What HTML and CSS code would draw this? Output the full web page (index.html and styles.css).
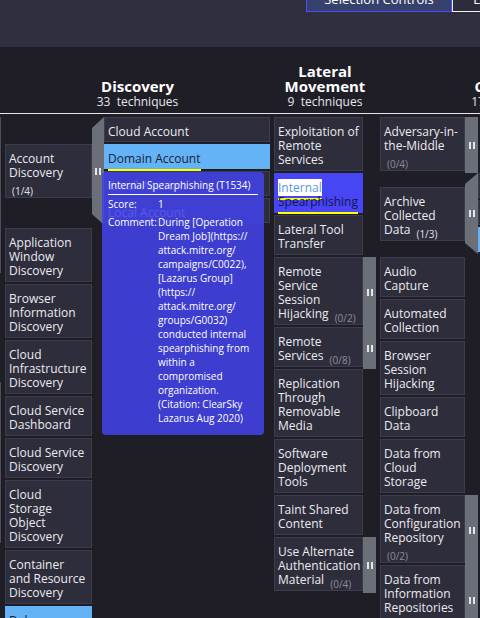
FILE: index.html
```html
<!DOCTYPE html>
<html>
<head>
<meta charset="utf-8">
<title>ATT&amp;CK Navigator</title>
<link rel="stylesheet" href="styles.css">
</head>
<body>
<div class="topbar">
  <div class="tbtn sel">Selection Controls</div>
  <div class="tbtn lyr">Layer Controls</div>
</div>

<div class="matrix">
  <div class="hdr-row">
    <div class="col col-stub"></div>
    <div class="col col-disc hdr"><div class="name">Discovery</div><div class="cnt">33&nbsp; techniques</div></div>
    <div class="col col-lat hdr"><div class="name">Lateral Movement</div><div class="cnt">9&nbsp; techniques</div></div>
    <div class="col col-coll hdr"><div class="name">Collection</div><div class="cnt">17&nbsp; techniques</div></div>
  </div>

  <div class="body-row">
    <div class="col col-stub">
      <div class="stub-seg a"></div>
      <div class="stub-seg b"></div>
    </div>

    <div class="col col-disc">
      <div class="grp">
        <div class="tw"><div class="t">Account Discovery <span class="c on">(1/4)</span></div></div>
        <div class="handle exp"><span class="grip"></span></div>
        <div class="subs">
          <div class="s">Cloud Account</div>
          <div class="s lb"><span class="u">Domain Account</span></div>
          <div class="s">Email Account</div>
          <div class="s">Local Account</div>
        </div>
      </div>
      <div class="t">Application Window Discovery</div>
      <div class="t">Browser Information Discovery</div>
      <div class="t">Cloud Infrastructure Discovery</div>
      <div class="t">Cloud Service Dashboard</div>
      <div class="t">Cloud Service Discovery</div>
      <div class="t">Cloud Storage Object Discovery</div>
      <div class="t">Container and Resource Discovery</div>
      <div class="t lb">Debugger Evasion</div>
      <div class="t">Device Driver Discovery</div>
    </div>

    <div class="col col-lat">
      <div class="t">Exploitation of Remote Services</div>
      <div class="t hot"><span class="u"><span class="hl">Internal</span> Spearphishing</span></div>
      <div class="t">Lateral Tool Transfer</div>
      <div class="row">
        <div class="t">Remote Service Session Hijacking <span class="c">(0/2)</span></div>
        <div class="handle"><span class="grip"></span></div>
      </div>
      <div class="row">
        <div class="t">Remote Services <span class="c">(0/8)</span></div>
        <div class="handle"><span class="grip"></span></div>
      </div>
      <div class="t">Replication Through Removable Media</div>
      <div class="t">Software Deployment Tools</div>
      <div class="t">Taint Shared Content</div>
      <div class="row">
        <div class="t">Use Alternate Authentication Material <span class="c">(0/4)</span></div>
        <div class="handle"><span class="grip"></span></div>
      </div>
    </div>

    <div class="col col-coll">
      <div class="row">
        <div class="t">Adversary-in-the-Middle <span class="c">(0/4)</span></div>
        <div class="handle"><span class="grip"></span></div>
      </div>
      <div class="grp">
        <div class="tw"><div class="t">Archive Collected Data <span class="c on">(1/3)</span></div></div>
        <div class="handle exp"><span class="grip"></span></div>
        <div class="subs">
          <div class="s">Archive via Custom Method</div>
          <div class="s">Archive via Library</div>
          <div class="s lb">Archive via Utility</div>
        </div>
      </div>
      <div class="t">Audio Capture</div>
      <div class="t">Automated Collection</div>
      <div class="t">Browser Session Hijacking</div>
      <div class="t">Clipboard Data</div>
      <div class="t">Data from Cloud Storage</div>
      <div class="row">
        <div class="t">Data from Configuration Repository <span class="c">(0/2)</span></div>
        <div class="handle"><span class="grip"></span></div>
      </div>
      <div class="row">
        <div class="t">Data from Information Repositories <span class="c">(0/3)</span></div>
        <div class="handle"><span class="grip"></span></div>
      </div>
    </div>
  </div>
</div>

<div class="tip">
  <div class="tip-title">Internal Spearphishing (T1534)</div>
  <div class="tip-grid">
    <div>Score:</div><div>1</div>
    <div>Comment:</div>
    <div>During [Operation<br>Dream Job](https://<br>attack.mitre.org/<br>campaigns/C0022),<br>[Lazarus Group]<br>(https://<br>attack.mitre.org/<br>groups/G0032)<br>conducted internal<br>spearphishing from<br>within a<br>compromised<br>organization.<br>(Citation: ClearSky<br>Lazarus Aug 2020)</div>
  </div>
</div>
</body>
</html>
```

FILE: styles.css
```css
html, body {
  margin: 0;
  padding: 0;
  width: 480px;
  height: 618px;
  overflow: hidden;
}
body {
  position: relative;
  background: #1f1e27;
  font-family: "Open Sans", "Noto Sans", sans-serif;
  color: #ebebf0;
}

/* top bar */
.topbar {
  height: 47px;
  background: #302f3f;
  display: flex;
  align-items: flex-start;
  padding-left: 306px;
  box-sizing: border-box;
}
.tbtn {
  flex: none;
  box-sizing: border-box;
  height: 26px;
  margin-top: -14px;
  line-height: 24px;
  font-size: 13px;
  color: #fff;
  text-align: center;
  white-space: nowrap;
}
.tbtn.sel {
  width: 146px;
  background: #36416c;
  border: 1px solid #4a4aff;
}
.tbtn.lyr {
  width: 130px;
  background: #2d2c3c;
  border: 1px solid #f0f0f0;
}

/* matrix */
.hdr-row {
  display: flex;
  gap: 4px;
  height: 67px;
  box-sizing: border-box;
  border-bottom: 1px solid #e6e6ea;
}
.body-row {
  display: flex;
  gap: 4px;
  padding-top: 3px;
  align-items: flex-start;
}
.col { flex: none; }
.col-stub { width: 1px; }
.col-disc { width: 265px; }
.col-lat { width: 102px; }
.col-coll { width: 264px; }

.hdr {
  height: 66px;
  box-sizing: border-box;
  display: flex;
  flex-direction: column;
  justify-content: flex-end;
  align-items: center;
  text-align: center;
  padding-bottom: 3px;
}
.hdr .name {
  font-weight: 700;
  font-size: 15px;
  line-height: 15px;
  color: #ffffff;
}
.hdr .cnt {
  font-size: 12px;
  line-height: 16px;
  color: #e6e6ea;
  white-space: nowrap;
}

.stub-seg { width: 1px; background: #4e4d5b; }
.stub-seg.a { height: 156px; }
.stub-seg.b { height: 161px; margin-top: 109px; }

/* technique cards */
.t, .s {
  box-sizing: border-box;
  background: #2e2d3b;
  border: 1px solid #3d3c4b;
  color: #ebebf0;
  font-size: 12px;
  line-height: 14px;
  margin-bottom: 2px;
  flex: none;
}
.t { padding: 7px 4px 3px 3px; }
.col-disc .t { width: 87px; padding-right: 4px; }
.col-lat .t { width: 89px; padding-right: 3px; }
.col-coll .t { width: 85px; padding-right: 2px; }

.s {
  width: 166px;
  padding: 7px 4px 2px 3px;
  white-space: nowrap;
}

.lb {
  background: #63b3f6;
  border-color: #63b3f6;
  color: #1d1d33;
}
.t.hot {
  background: #4646f5;
  border-color: #4646f5;
  color: #15154a;
}
.u {
  border-bottom: 2px solid #ffff00;
  padding-bottom: 2px;
}
.hl {
  background: #ffffff;
  color: #5b97e8;
}

.c {
  font-size: 10px;
  line-height: 0;
  vertical-align: -4px;
  color: #8d8d99;
  margin-left: 3px;
  white-space: nowrap;
}
.c.on { color: #e2e2e8; }

/* rows with sidebar handles */
.row { display: flex; }
.row .t { margin-bottom: 2px; }
.handle {
  flex: none;
  width: 13px;
  background: #6b6f78;
  display: flex;
  align-items: center;
  justify-content: center;
}
.col-disc .handle { width: 12px; }
.handle.exp {
  clip-path: polygon(0 11px, 100% 0, 100% 100%, 0 calc(100% - 11px));
}
.grip {
  display: block;
  width: 2px;
  height: 7px;
  border-left: 2px solid #e6e6ea;
  border-right: 2px solid #e6e6ea;
}

.grp {
  display: flex;
  margin-bottom: 3px;
}
.grp .tw {
  display: flex;
  align-items: center;
}
.grp .tw .t { margin-bottom: 0; }
.subs { display: flex; flex-direction: column; }

/* tooltip */
.tip {
  position: absolute;
  left: 102px;
  top: 172px;
  width: 162px;
  box-sizing: border-box;
  padding: 6px 6px 10px;
  background: rgba(66, 66, 232, 0.88);
  border-radius: 4px;
  color: #ffffff;
  font-size: 10px;
  line-height: 14px;
}
.tip-title {
  border-bottom: 1px solid #ffffff;
  padding-bottom: 2px;
  white-space: nowrap;
}
.tip-grid {
  display: grid;
  grid-template-columns: 50px 1fr;
  row-gap: 4px;
  margin-top: 2px;
  white-space: nowrap;
}
```
